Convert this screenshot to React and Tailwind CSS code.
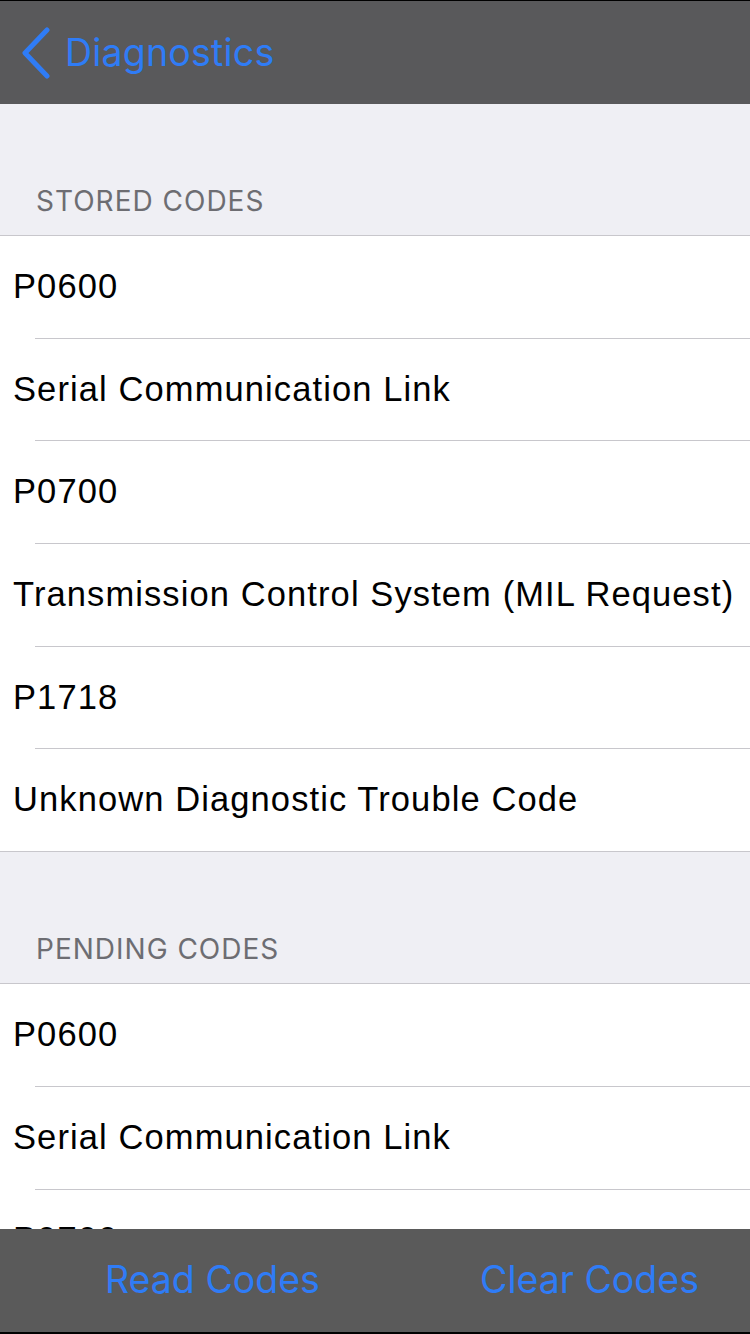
import React from 'react'

const stored = ['P0600', 'Serial Communication Link', 'P0700', 'Transmission Control System (MIL Request)', 'P1718', 'Unknown Diagnostic Trouble Code']
const pending = ['P0600', 'Serial Communication Link', 'P0700', 'Transmission Control System (MIL Request)']

const Section = ({ title, rows }) => (
    <div>
        <div className="h-[131px] flex items-end pb-[13px] pl-[36px] text-[28px] text-[#6d6d72] tracking-[1px]" style={{ fontFamily: 'Inter, "Open Sans", sans-serif' }}>
            {title}
        </div>
        <div className="bg-white border-t border-b border-[#c8c7cc]">
            {rows.map((r, i) => (
                <div key={i}>
                    <div className="h-[101.7px] flex items-center pl-[13px] text-[34.5px] tracking-[1.1px] text-black whitespace-nowrap" style={{ fontFamily: '"Liberation Sans", Arial, sans-serif' }}>
                        {r}
                    </div>
                    {i < rows.length - 1 && <div className="ml-[35px] h-px bg-[#c8c7cc]" />}
                </div>
            ))}
        </div>
    </div>
)

export default function App() {
    return (
        <div className="w-[750px] h-[1334px] flex flex-col bg-[#efeff4] overflow-hidden">
            <div className="h-[104px] shrink-0 bg-[#59595b] border-t border-black flex items-center pl-[20px]">
                <svg width="32" height="52" viewBox="0 0 32 52" className="mr-[13px]">
                    <path d="M27 3 L5 26 L27 49" fill="none" stroke="#2f7cf6" strokeWidth="5" strokeLinecap="round" strokeLinejoin="round" />
                </svg>
                <span className="text-[37.5px] tracking-[0.2px] text-[#2f7cf6] mt-[2px]" style={{ fontFamily: 'Inter, sans-serif' }}>Diagnostics</span>
            </div>
            <div className="flex-1 overflow-hidden">
                <Section title="STORED CODES" rows={stored} />
                <Section title="PENDING CODES" rows={pending} />
            </div>
            <div className="h-[105px] shrink-0 bg-[#5a5a5a] border-b-2 border-black flex items-center pl-[105px] text-[37.5px] text-[#2f7cf6]" style={{ fontFamily: 'Inter, sans-serif' }}>
                <span className="w-[375px]">Read Codes</span>
                <span>Clear Codes</span>
            </div>
        </div>
    )
}
